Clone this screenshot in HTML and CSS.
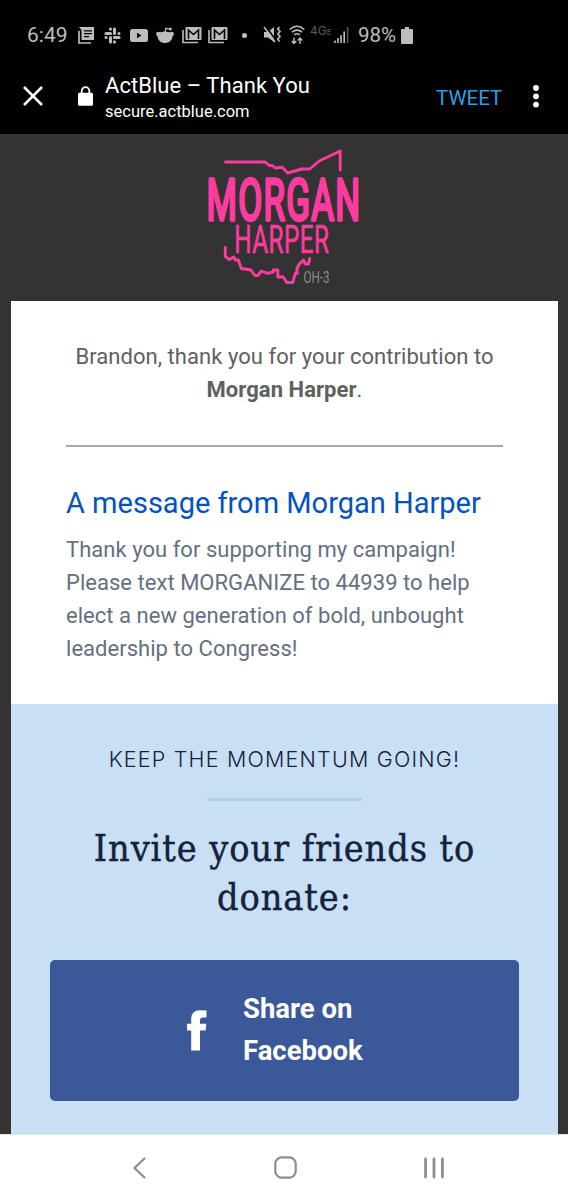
FILE: index.html
```html
<!DOCTYPE html>
<html lang="en">
<head>
  <meta charset="UTF-8">
  <title>ActBlue – Thank You</title>
  <link rel="stylesheet" href="styles.css">
</head>
<body>

  <div class="status">
    <span class="time">6:49</span>
    <svg class="news" width="17" height="17" viewBox="0 0 17 17">
      <path d="M1 4v12h12" fill="none" stroke="#bdbdbd" stroke-width="1.7"/>
      <path d="M1 0h15v13H3.500V3z" fill="#bdbdbd"/>
      <path d="M6 3.800h8M6 6.700h8M6 9.600h5" stroke="#000" stroke-width="1.300"/>
    </svg>
    <svg class="slack" width="17" height="17" viewBox="0 0 17 17" fill="none" stroke="#bdbdbd" stroke-width="3.100" stroke-linecap="round">
      <path d="M6.500 2v.1M2 6.500h4.500M10.500 2v4.500M14.900 6.500h.1M15 10.500h-4.500M10.500 14.900v.1M6.500 15v-4.500M2 10.500h.1"/>
    </svg>
    <svg class="youtube" width="18" height="13" viewBox="0 0 18 13">
      <rect width="18" height="13" rx="2.500" fill="#bdbdbd"/>
      <path d="M7 3.700v5.600l4.500-2.800z" fill="#000"/>
    </svg>
    <svg class="reddit" width="18" height="17" viewBox="0 0 18 17">
      <path d="M9 5l1-3.700 4 .7" fill="none" stroke="#bdbdbd" stroke-width="1.200"/>
      <circle cx="14.300" cy="2" r="1.500" fill="#bdbdbd"/>
      <circle cx="2.300" cy="7" r="2.200" fill="#bdbdbd"/>
      <circle cx="15.700" cy="7" r="2.200" fill="#bdbdbd"/>
      <path d="M1.500 6.500Q9 2.500 16.500 6.500v3C16 14 12.500 16 9 16s-7-2-7.500-6.500z" fill="#bdbdbd"/>
    </svg>
    <svg class="mail" width="20" height="17" viewBox="0 0 20 17" fill="none">
      <path d="M1 3v12.500h15" stroke="#bdbdbd" stroke-width="1.600"/>
      <rect x="3.500" y="0" width="16" height="13" rx="1" fill="#bdbdbd"/>
      <path d="M6.500 12V3l5 4.500 5-4.500v9" stroke="#000" stroke-width="1.600"/>
    </svg>
    <svg class="mail" width="20" height="17" viewBox="0 0 20 17" fill="none">
      <path d="M1 3v12.500h15" stroke="#bdbdbd" stroke-width="1.600"/>
      <rect x="3.500" y="0" width="16" height="13" rx="1" fill="#bdbdbd"/>
      <path d="M6.500 12V3l5 4.500 5-4.500v9" stroke="#000" stroke-width="1.600"/>
    </svg>
    <span class="more-dot"></span>
    <svg class="mute" width="18" height="18" viewBox="0 0 18 18" fill="none">
      <path d="M0 6h4l6-5v15l-6-4.500H0z" fill="#bdbdbd"/>
      <path d="M1.500 0l11 15" stroke="#000" stroke-width="1.500"/>
      <path d="M0 1l11 15" stroke="#bdbdbd" stroke-width="1.500"/>
      <path d="M15.500 1l-1.700 2 2.200 2.500-2.200 2.500 2.200 2.500-2.200 2.500 1.700 2.500" stroke="#bdbdbd" stroke-width="1.700"/>
    </svg>
    <svg class="wifi" width="16" height="20" viewBox="0 0 16 20" fill="none" stroke="#bdbdbd" stroke-width="1.600">
      <path d="M.7 4.500q7.300-6.500 14.600 0M3 7.200q5-4.200 10 0M5.300 9.800q2.700-2 5.400 0"/>
      <path d="M5 12.500v5.800M2.800 16L5 18.500 7.200 16M11 19v-5.800M8.800 15.500L11 13l2.200 2.500" stroke-width="1.400"/>
    </svg>
    <span class="lte">4G<small>E</small></span>
    <svg class="signal" width="15" height="16" viewBox="0 0 15 16" stroke="#bdbdbd" stroke-width="1.600">
      <path d="M1 16v-2.500M4 16v-5M7 16V8.300M10.200 16V4.500"/>
      <path d="M13.600 16V0" stroke="#555"/>
    </svg>
    <span class="percent">98%</span>
    <svg class="battery" width="12" height="17" viewBox="0 0 12 17" fill="#bdbdbd">
      <path d="M4 0h4v2h3q1 0 1 1v13q0 1-1 1H1q-1 0-1-1V3q0-1 1-1h3z"/>
    </svg>
  </div>

  <div class="toolbar">
    <svg class="close" width="20" height="20" viewBox="0 0 20 20" stroke="#fff" stroke-width="2.500">
      <path d="M1 1l18 18M19 1L1 19"/>
    </svg>
    <svg class="lock" width="15" height="20" viewBox="0 0 15 20">
      <path d="M3.700 9V5a3.800 3.800 0 0 1 7.600 0v4" fill="none" stroke="#fff" stroke-width="1.800"/>
      <rect y="6.700" width="15" height="13" rx="1.500" fill="#fff"/>
    </svg>
    <div class="page-info">
      <div class="page-title">ActBlue – Thank You</div>
      <div class="page-url">secure.actblue.com</div>
    </div>
    <span class="tweet">TWEET</span>
    <svg class="menu" width="6" height="23" viewBox="0 0 6 23" fill="#fff">
      <circle cx="3" cy="3" r="2.900"/>
      <circle cx="3" cy="11.300" r="2.900"/>
      <circle cx="3" cy="19.600" r="2.900"/>
    </svg>
  </div>

  <div class="page">
    <div class="logo">
      <svg width="160" height="144" viewBox="205 145 160 144">
        <g fill="none" stroke="#ff3ba0" stroke-width="2.900" stroke-linejoin="round" stroke-linecap="round">
          <path d="M225.500 162h39.700l4 3.500h3l3 2.500 7-.7 5.500 5.700 14-4h8l9.500-8 21-10v19"/>
          <path d="M225.300 247.500v9l4 3 4.500-2.500 1.500 3h3l3 8.500 9.500 1.500 4 5.500h3l3.500-4.500 6 2.300 6-1.300v-2h4.500v7h5.500l3.500 5.500h6l2.500-9h2l-.5-4.500 2.500-5 4-4 2 4h3l1.500-5.500"/>
        </g>
        <text class="logo-first" transform="translate(206.500 220.200) scale(.6 1)" textLength="256" lengthAdjust="spacing">MORGAN</text>
        <text class="logo-last" transform="translate(234.300 252.700) scale(.64 1)" textLength="148" lengthAdjust="spacing">HARPER</text>
        <text class="logo-district" x="303.500" y="282.700" textLength="26" lengthAdjust="spacingAndGlyphs">OH-3</text>
      </svg>
    </div>

    <div class="card">
      <p class="thanks">Brandon, thank you for your contribution to <b>Morgan Harper</b>.</p>
      <hr class="line">
      <h2>A message from Morgan Harper</h2>
      <p class="message">Thank you for supporting my campaign! Please text MORGANIZE to 44939 to help elect a new generation of bold, unbought leadership to Congress!</p>
    </div>

    <div class="share">
      <div class="momentum">KEEP THE MOMENTUM GOING!</div>
      <div class="divider"></div>
      <h1>Invite your friends to<br>donate:</h1>
      <button class="facebook">
        <svg width="20" height="41" viewBox="0 0 20 41" fill="#fff">
          <path d="M19.500.5v7h-3.500q-3 0-3 3v3.200h6.300l-.7 6.800H13v20H4.200v-20H0v-6.800h4.200V9.500Q4.200.3 13 .3z"/>
        </svg>
        <span>Share on<br>Facebook</span>
      </button>
    </div>
  </div>

  <div class="nav">
    <svg width="13" height="22" viewBox="0 0 13 22" fill="none" stroke="#8e8e8e" stroke-width="2.200" stroke-linecap="round" stroke-linejoin="round">
      <path d="M11.500 1.500L1.500 11l10 9.500"/>
    </svg>
    <svg width="23" height="23" viewBox="0 0 23 23" fill="none" stroke="#8e8e8e" stroke-width="2.200">
      <rect x="1.300" y="1.300" width="20.400" height="20.400" rx="6.500"/>
    </svg>
    <svg width="20" height="22" viewBox="0 0 20 22" stroke="#8e8e8e" stroke-width="2.800" stroke-linecap="round">
      <path d="M1.600 2v18M10 2v18M18.400 2v18"/>
    </svg>
  </div>

</body>
</html>
```
FILE: styles.css
```css
body {
  margin: 0;
  width: 568px;
  height: 1200px;
  overflow: hidden;
  background: #fff;
  font-family: Roboto, sans-serif;
}

svg {
  display: block;
  flex: none;
  overflow: visible;
}

/* phone status bar */
.status {
  display: flex;
  align-items: center;
  box-sizing: border-box;
  height: 70px;
  padding-left: 27px;
  background: #000;
  color: #bdbdbd;
}

.time {
  width: 51px;
  font-size: 21px;
}

.news { margin-right: 9px; }
.slack { margin-right: 9px; }
.youtube { margin-right: 8px; }
.reddit { margin-right: 8px; }
.mail { margin-right: 6px; }

.more-dot {
  width: 5px;
  height: 5px;
  margin: 0 17px 0 8px;
  border-radius: 50%;
  background: #bdbdbd;
}

.mute { margin-right: 7px; }
.wifi { margin-right: 5px; }

.lte {
  width: 24px;
  margin-top: -8px;
  color: #5c5c5c;
  font-family: Inter, sans-serif;
  font-size: 12px;
  line-height: 12px;
  white-space: nowrap;
}

.lte small {
  font-size: 8px;
}

.percent {
  width: 43px;
  margin-left: 9px;
  font-size: 20.5px;
}

/* browser toolbar */
.toolbar {
  display: flex;
  align-items: center;
  box-sizing: border-box;
  height: 64px;
  padding: 0 0 12px 23px;
  background: #000;
  color: #fff;
}

.lock { margin: 0 12px 0 35px; }

.page-info {
  width: 331px;
  padding-top: 2px;
}

.page-title {
  font-size: 22px;
  letter-spacing: .05px;
  line-height: 28px;
}

.page-url {
  font-size: 16.5px;
  line-height: 23px;
}

.tweet {
  width: 97px;
  padding-top: 4px;
  color: #2f9ce6;
  font-size: 20.5px;
}

.page {
  box-sizing: border-box;
  height: 1000px;
  padding: 0 10px 0 11px;
  background: #333;
}

.logo {
  display: flex;
  justify-content: center;
  box-sizing: border-box;
  height: 167px;
  padding-top: 11px;
}

.logo-first {
  fill: #ff3ba0;
  stroke: #ff3ba0;
  stroke-width: 3.4px;
  stroke-linejoin: round;
  font-size: 58px;
  font-weight: 400;
}

.logo-last {
  fill: #ff3ba0;
  stroke: #ff3ba0;
  stroke-width: .6px;
  font-size: 38px;
}

.logo-district {
  fill: #8c8c8c;
  font-size: 16px;
}

.card {
  box-sizing: border-box;
  height: 403px;
  padding: 39px 55px 0;
  background: #fff;
}

.thanks {
  margin: 0;
  color: #606060;
  font-size: 22px;
  letter-spacing: .05px;
  line-height: 33px;
  text-align: center;
}

.line {
  height: 2px;
  margin: 39px 0 36px;
  border: none;
  background: #a8a8a8;
}

h2 {
  margin: 0;
  color: #0253c0;
  font-size: 29px;
  font-weight: 400;
  line-height: 40px;
  white-space: nowrap;
}

.message {
  margin: 10px 0 0;
  color: #646f83;
  font-size: 22px;
  letter-spacing: .03px;
  line-height: 33px;
}

.share {
  box-sizing: border-box;
  height: 430px;
  padding: 40px 39px 0;
  background: #c8dff4;
  color: #14213f;
  text-align: center;
}

.momentum {
  font-family: Inter, sans-serif;
  font-size: 21.5px;
  font-weight: 300;
  letter-spacing: 1.2px;
  line-height: 30px;
  white-space: nowrap;
}

.divider {
  width: 155px;
  height: 3px;
  margin: 24px auto 23px;
  background: #abd0ee;
}

h1 {
  margin: 0;
  font-family: "DejaVu Serif", serif;
  font-size: 37.5px;
  font-stretch: condensed;
  font-weight: 400;
  letter-spacing: .9px;
  line-height: 49px;
  white-space: nowrap;
  -webkit-text-stroke: .4px #14213f;
}

.facebook {
  display: flex;
  align-items: center;
  box-sizing: border-box;
  width: 469px;
  height: 141px;
  margin-top: 38px;
  padding: 0 0 0 137px;
  border: none;
  border-radius: 5px;
  background: #3b5998;
  color: #fff;
  font-family: inherit;
  font-size: 27.5px;
  font-weight: 700;
  line-height: 42px;
  text-align: left;
}

.facebook span {
  margin: -2px 0 0 36px;
}

/* android navigation */
.nav {
  display: flex;
  align-items: center;
  justify-content: space-between;
  box-sizing: border-box;
  height: 66px;
  padding: 0 124px 0 133px;
  border-top: 1px solid #e4e6e8;
  background: #fff;
}
```
